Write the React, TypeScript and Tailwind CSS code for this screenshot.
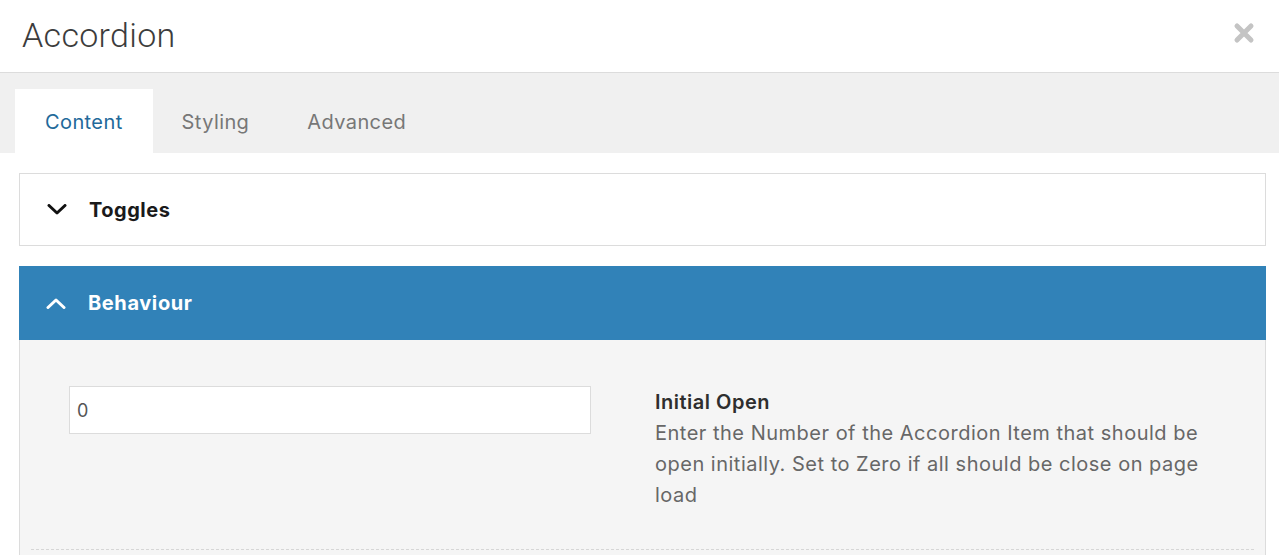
import { useState } from "react";

const tabs = ["Content", "Styling", "Advanced"];

function Chevron({ up, className }: { up?: boolean; className?: string }) {
  return (
    <svg width="20" height="12" viewBox="0 0 20 12" className={className} fill="none">
      <path
        d={up ? "M2 10.5 L10 3 L18 10.5" : "M2 1.5 L10 9 L18 1.5"}
        stroke="currentColor"
        strokeWidth="3"
        strokeLinecap="round"
        strokeLinejoin="round"
      />
    </svg>
  );
}

export default function App() {
  const [active, setActive] = useState("Content");
  const [value, setValue] = useState("0");

  return (
    <div className="w-[1279px] h-[555px] overflow-hidden bg-white font-['Inter','Roboto',sans-serif]">
      {/* header */}
      <div className="h-[73px] flex items-center justify-between pl-[22px] pr-[24px] border-b border-[#dcdcdc]">
        <h1 className="font-['Roboto',sans-serif] text-[34px] font-light text-[#3c3c3c] leading-none -mt-[2px] tracking-[0.3px]">Accordion</h1>
        <svg width="22" height="22" viewBox="0 0 22 22" className="text-[#c4c4c4] -mt-[6px]">
          <path d="M4 4 L18 18 M18 4 L4 18" stroke="currentColor" strokeWidth="5" strokeLinecap="round" />
        </svg>
      </div>

      {/* tabs */}
      <div className="h-[80px] bg-[#f0f0f0] flex items-end pl-[15px]">
        {tabs.map((t) => (
          <button
            key={t}
            onClick={() => setActive(t)}
            className={
              t === active
                ? "h-[64px] px-[30px] bg-white text-[20px] tracking-[0.4px] text-[#22699a] pt-[2px]"
                : "h-[64px] px-[29px] text-[20px] tracking-[0.4px] text-[#777] pt-[2px]"
            }
          >
            {t}
          </button>
        ))}
      </div>

      {/* accordion */}
      <div className="pt-[20px] pl-[19px] pr-[13px]">
        <div className="h-[73px] border border-[#dcdcdc] flex items-center pl-[27px] gap-[22px]">
          <Chevron className="text-[#111]" />
          <span className="text-[20px] font-bold tracking-[0.5px] text-[#1a1a1a]">Toggles</span>
        </div>

        <div className="mt-[20px] h-[74px] bg-[#3182b8] flex items-center pl-[27px] gap-[22px]">
          <Chevron up className="text-white" />
          <span className="text-[20px] font-bold tracking-[0.6px] text-white">Behaviour</span>
        </div>

        <div className="bg-[#f5f5f5] border-x border-[#dcdcdc] h-[300px] pt-[46px] px-[11px]">
          <div className="flex pl-[38px]">
            <input
              value={value}
              onChange={(e) => setValue(e.target.value)}
              className="w-[522px] h-[48px] bg-white border border-[#dcdcdc] px-[7px] text-[18px] text-[#555] outline-none"
            />
            <div className="ml-[64px] w-[560px] mt-[1px]">
              <div className="text-[20px] font-semibold tracking-[0.5px] text-[#2e2e2e] leading-[31px]">Initial Open</div>
              <p className="text-[20px] tracking-[0.5px] text-[#676767] leading-[31px] w-[550px]">
                Enter the Number of the Accordion Item that should be open initially. Set to Zero if all should be close on page load
              </p>
            </div>
          </div>
          <div className="mt-[38px] border-t border-dashed border-[#d6d6d6]" />
        </div>
      </div>
    </div>
  );
}
